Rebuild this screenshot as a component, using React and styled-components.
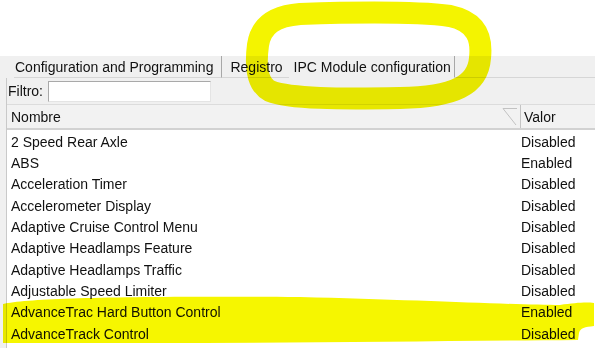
import React from 'react';
import styled, { createGlobalStyle } from 'styled-components';

const GlobalStyle = createGlobalStyle`
  html, body {
    margin: 0;
    padding: 0;
    background: #ffffff;
  }
  body {
    font-family: "Liberation Sans", Arial, sans-serif;
    color: #111111;
  }
`;

const Page = styled.div`
  position: relative;
  width: 595px;
  height: 348px;
  overflow: hidden;
  display: flex;
  flex-direction: column;
  background: #ffffff;
`;

const TopSpace = styled.div`
  height: 56px;
  background: #ffffff;
`;

const Window = styled.div`
  flex: 1;
  display: flex;
  flex-direction: column;
  background: #f0f0f0;
`;

const TabBar = styled.div`
  display: flex;
  height: 22px;
  padding-left: 14px;
`;

const Tab = styled.div`
  display: flex;
  align-items: center;
  font-size: 14px;
  line-height: 1;
  padding: ${p => p.$pad};
  border-right: ${p => (p.$divider ? '1px solid #a8a8a8' : 'none')};
  border-bottom: 1px solid ${p => (p.$selected ? 'transparent' : '#d6d6d6')};
  white-space: nowrap;
`;

const TabFiller = styled.div`
  flex: 1;
  border-bottom: 1px solid #d6d6d6;
`;

const Content = styled.div`
  flex: 1;
  display: flex;
  flex-direction: column;
  margin-left: 6px;
  border-left: 1px solid #c9c9c9;
`;

const FilterRow = styled.div`
  display: flex;
  align-items: center;
  gap: 5px;
  height: 26px;
  padding-left: 1px;
  font-size: 14px;
`;

const FilterInput = styled.input`
  width: 157px;
  height: 19px;
  margin: 0;
  padding: 0 2px;
  border: 1px solid #e4e4e4;
  border-top-color: #a9a9a9;
  border-left-color: #a9a9a9;
  background: #ffffff;
  font: inherit;
  outline: none;
`;

const Columns = styled.div`
  display: grid;
  grid-template-columns: 1fr 75px;
`;

const Header = styled(Columns)`
  height: 23px;
  border-top: 1px solid #dcdcdc;
  border-bottom: 2px solid #d2d2d2;
  background: #f2f2f2;
  font-size: 14px;
`;

const HeaderCell = styled.div`
  position: relative;
  display: flex;
  align-items: center;
  padding-left: ${p => (p.$value ? '3px' : '4px')};
  border-left: ${p => (p.$value ? '1px solid #c4c4c4' : 'none')};
`;

const SortMark = styled.svg`
  position: absolute;
  right: 2px;
  top: 2px;
`;

const List = styled.div`
  flex: 1;
  background: #ffffff;
  padding-top: 1px;
`;

const Row = styled(Columns)`
  height: 21.33px;
  align-items: center;
  font-size: 14px;
`;

const Cell = styled.div`
  padding-left: ${p => (p.$value ? '1px' : '4px')};
  white-space: nowrap;
`;

// hand-drawn marker annotations laid over the screenshot
const Annotations = styled.svg`
  position: absolute;
  left: 0;
  top: 0;
  pointer-events: none;
  mix-blend-mode: multiply;
`;

const features = [
  ['2 Speed Rear Axle', 'Disabled'],
  ['ABS', 'Enabled'],
  ['Acceleration Timer', 'Disabled'],
  ['Accelerometer Display', 'Disabled'],
  ['Adaptive Cruise Control Menu', 'Disabled'],
  ['Adaptive Headlamps Feature', 'Disabled'],
  ['Adaptive Headlamps Traffic', 'Disabled'],
  ['Adjustable Speed Limiter', 'Disabled'],
  ['AdvanceTrac Hard Button Control', 'Enabled'],
  ['AdvanceTrack Control', 'Disabled'],
];

export default function App() {
  return (
    <>
      <GlobalStyle />
      <Page>
        <TopSpace />
        <Window>
          <TabBar>
            <Tab $pad="0 8px 0 1px" $divider>Configuration and Programming</Tab>
            <Tab $pad="0 6px 0 8px">Registro</Tab>
            <Tab $pad="0 3px 0 5px" $divider $selected>IPC Module configuration</Tab>
            <TabFiller />
          </TabBar>
          <Content>
            <FilterRow>
              <span>Filtro:</span>
              <FilterInput type="text" />
            </FilterRow>
            <Header>
              <HeaderCell>
                Nombre
                <SortMark width="16" height="19" viewBox="0 0 16 19">
                  <path d="M1 1.5 H15 M1 1.5 L14 18" stroke="#c2c2c2" strokeWidth="1" fill="none" />
                </SortMark>
              </HeaderCell>
              <HeaderCell $value>Valor</HeaderCell>
            </Header>
            <List>
              {features.map(([name, value]) => (
                <Row key={name}>
                  <Cell>{name}</Cell>
                  <Cell $value>{value}</Cell>
                </Row>
              ))}
            </List>
          </Content>
        </Window>
        <Annotations width="595" height="348" viewBox="0 0 595 348">
          <path
            d="M300 14 C360 12 420 12 450 16 C478 22 482 40 480 58 C478 85 455 97 400 98 C340 99 290 99 270 91 C255 83 256 60 258 45 C261 25 275 16 300 14 Z"
            fill="none"
            stroke="#f4f400"
            strokeWidth="22"
            strokeLinejoin="round"
          />
          <path
            d="M3 304 C30 298 120 296 300 297 C420 300 520 305 560 305 C575 303 585 302 594 303 L594 326 C585 327 580 328 579 333 L578 340 C450 341 300 343 150 343 L3 343 Z"
            fill="#f6f600"
          />
        </Annotations>
      </Page>
    </>
  );
}
